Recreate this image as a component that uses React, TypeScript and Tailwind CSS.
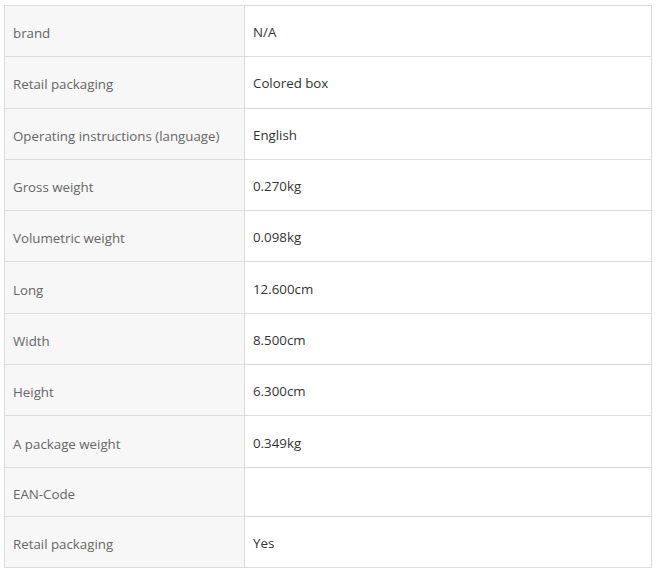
const specs: [string, string][] = [
  ["brand", "N/A"],
  ["Retail packaging", "Colored box"],
  ["Operating instructions (language)", "English"],
  ["Gross weight", "0.270kg"],
  ["Volumetric weight", "0.098kg"],
  ["Long", "12.600cm"],
  ["Width", "8.500cm"],
  ["Height", "6.300cm"],
  ["A package weight", "0.349kg"],
  ["EAN-Code", ""],
  ["Retail packaging", "Yes"],
];

export default function App() {
  return (
    <div className="w-[656px] h-[572px] bg-white pt-[5px] pl-[4px] font-['Open_Sans','Noto_Sans',sans-serif]">
      <table className="w-[648px] border-collapse text-[13.3px]">
        <tbody>
          {specs.map(([label, value], i) => (
            <tr key={i} className={value ? "h-[51.3px]" : "h-[49.3px]"}>
              <td className="w-[240px] border border-[#dcdcdc] bg-[#f7f7f7] pl-[8px] pt-[6px] align-middle text-[#666]">
                {label}
              </td>
              <td className="border border-[#dcdcdc] bg-white pl-[8px] pt-[4px] align-middle text-[#333]">
                {value}
              </td>
            </tr>
          ))}
        </tbody>
      </table>
    </div>
  );
}
